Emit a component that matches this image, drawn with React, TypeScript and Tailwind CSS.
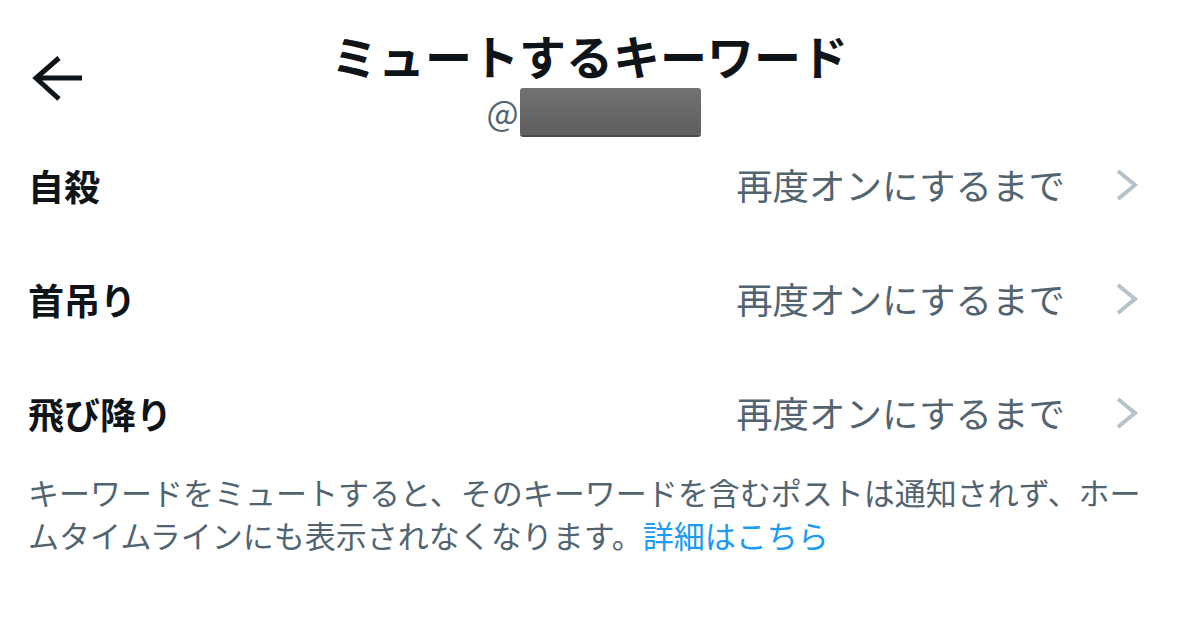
import React from 'react';

const rows = ['自殺', '首吊り', '飛び降り'];

function BackArrow() {
  return (
    <svg width="52" height="48" viewBox="0 0 52 48" fill="none">
      <path d="M51 24H6" stroke="#0f1419" strokeWidth="5" />
      <path d="M28 4L5 24L28 45" stroke="#0f1419" strokeWidth="5" strokeLinejoin="miter" />
    </svg>
  );
}

function Chevron() {
  return (
    <svg width="24" height="34" viewBox="0 0 24 34" fill="none">
      <path d="M3 3L20 17L3 31" stroke="#b6c2ca" strokeWidth="4" />
    </svg>
  );
}

export default function App() {
  return (
    <div
      className="w-[1179px] h-[639px] bg-white overflow-hidden text-[#0f1419]"
      style={{ fontFamily: '"Noto Sans CJK JP", "Noto Sans", sans-serif' }}
    >
      {/* header */}
      <div className="grid grid-cols-[1fr_auto_1fr] h-[128px]">
        <div className="pl-[31px] pt-[54px]">
          <BackArrow />
        </div>
        <div className="flex flex-col items-center pt-[27px]">
          <div className="text-[47px] leading-[56px] font-bold">ミュートするキーワード</div>
          <div className="mt-[5px] flex items-center h-[47px] pl-[8px]">
            <span className="text-[34px] leading-[47px] text-[#536471] mr-[1px]">@</span>
            <div className="w-[181px] h-[47px] rounded-[3px] bg-gradient-to-b from-[#727272] to-[#5e5e5e] shadow-[0_2px_0_#4a4a4f]" />
          </div>
        </div>
        <div />
      </div>

      {/* keyword list */}
      {rows.map((word) => (
        <div key={word} className="h-[114px] flex items-center justify-between pl-[28px] pr-[40px]">
          <span className="text-[36px] font-bold leading-none">{word}</span>
          <div className="flex items-center gap-[50px]">
            <span className="text-[36.5px] leading-none text-[#536471]">再度オンにするまで</span>
            <Chevron />
          </div>
        </div>
      ))}

      {/* note */}
      <p className="px-[28px] text-[31px] leading-[43px] text-[#536471] whitespace-nowrap">
        キーワードをミュートすると、そのキーワードを含むポストは通知されず、ホー
        <br />
        ムタイムラインにも表示されなくなります。<span className="text-[#1d9bf0]">詳細はこちら</span>
      </p>
    </div>
  );
}
